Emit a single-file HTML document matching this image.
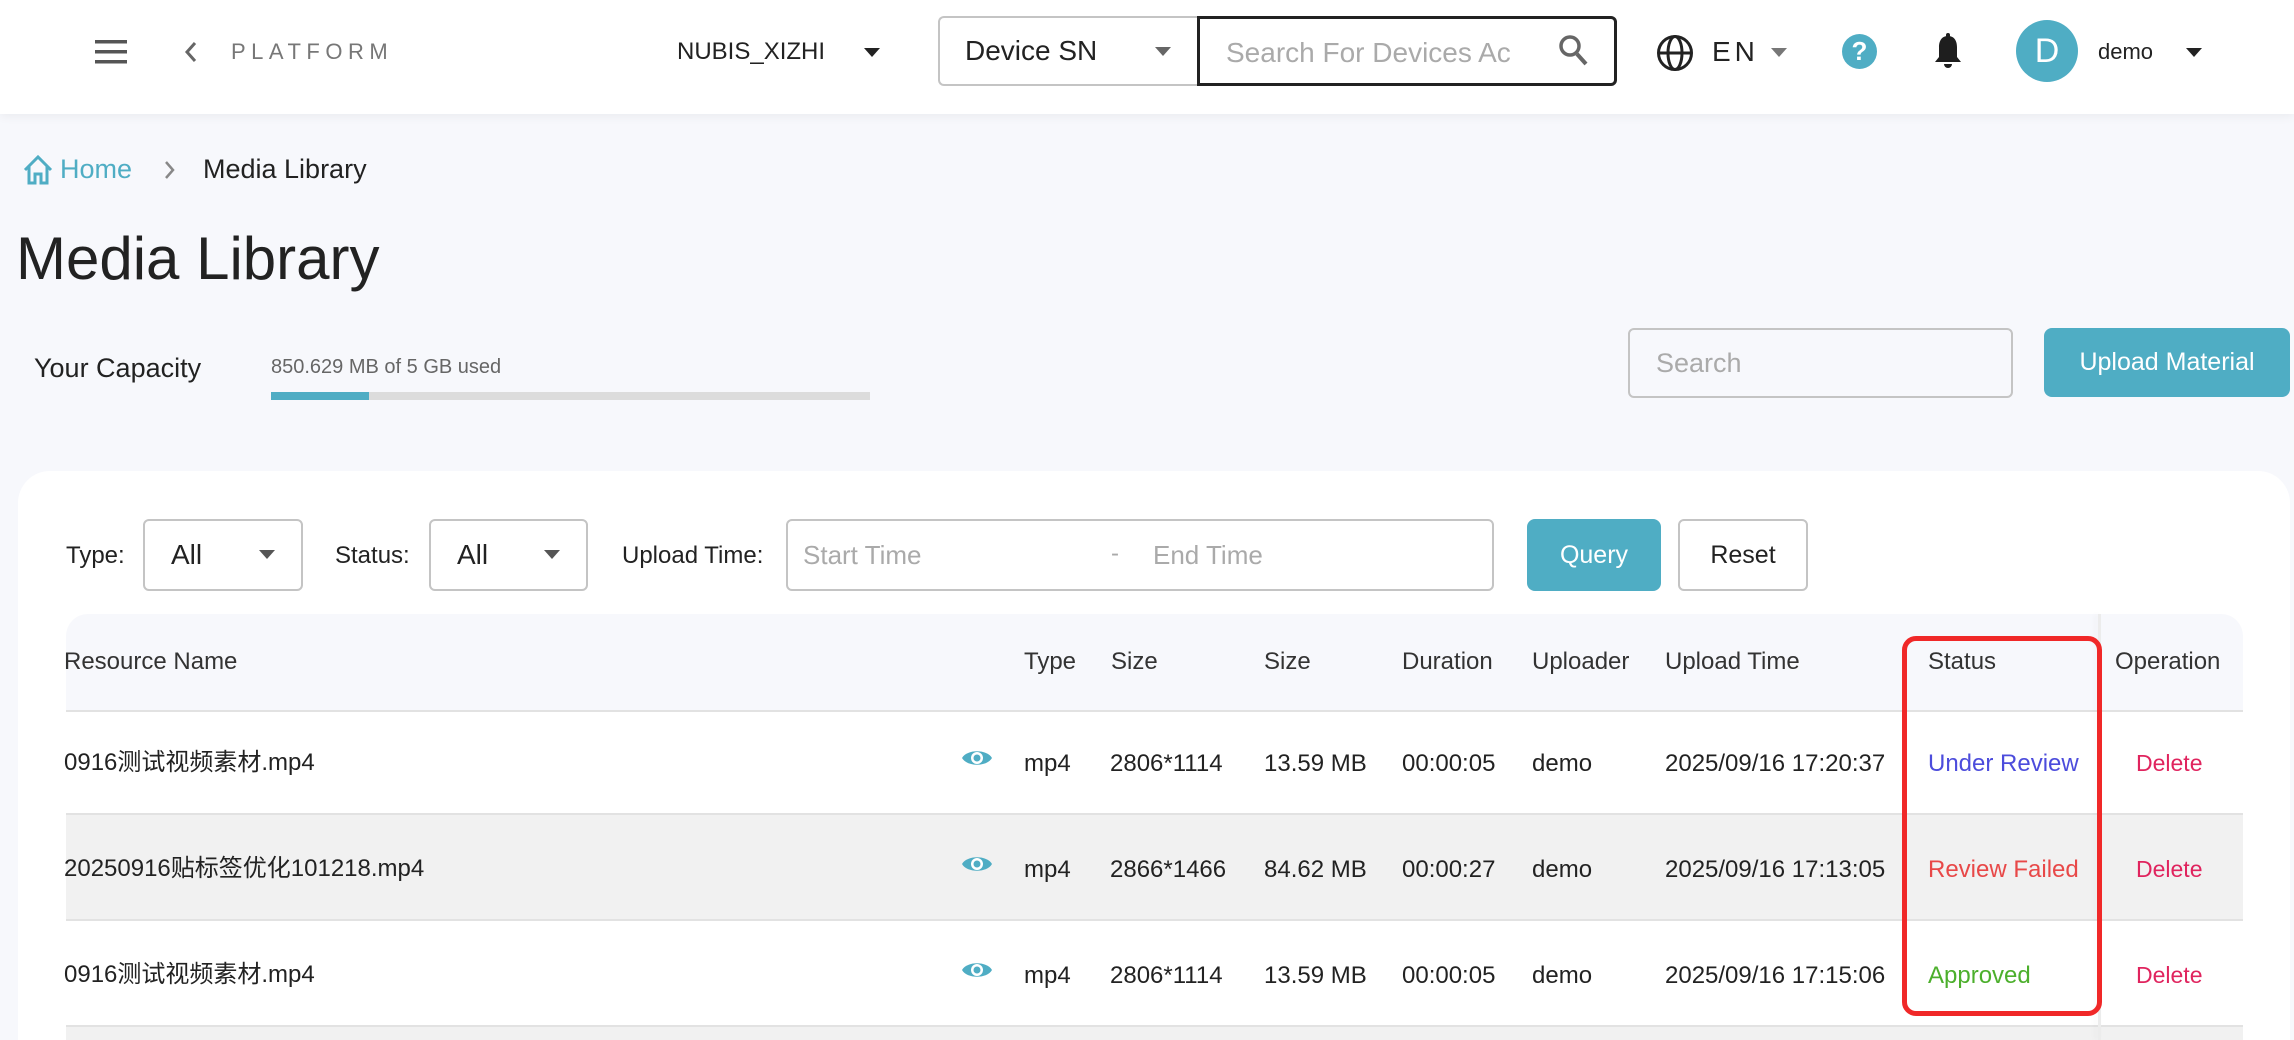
<!DOCTYPE html>
<html><head><meta charset="utf-8"><style>
*{box-sizing:border-box;margin:0;padding:0}
html{width:2294px;height:1040px;overflow:hidden}
body{width:2294px;height:1040px;overflow:hidden;background:#f7f8fc;font-family:"Liberation Sans","Noto Sans CJK SC",sans-serif;color:#222;position:relative}
.a{position:absolute;white-space:nowrap}
.hdr{position:absolute;left:0;top:0;width:2294px;height:114px;background:#fff;box-shadow:0 2px 10px rgba(0,0,0,.06)}
.caret{position:absolute;width:0;height:0;border-left:8px solid transparent;border-right:8px solid transparent;border-top:9px solid #222}
.box{position:absolute;border:2px solid #c4c4c4;border-radius:6px;background:#fff}
.th{position:absolute;top:648px;font-size:24px;color:#333;white-space:nowrap}
.td{position:absolute;font-size:24px;color:#222;white-space:nowrap}
</style></head><body>
<div class="hdr">
  <svg class="a" style="left:95px;top:40px" width="32" height="24" viewBox="0 0 32 24"><rect y="0" width="32" height="3.5" fill="#555"/><rect y="10" width="32" height="3.5" fill="#555"/><rect y="20" width="32" height="3.5" fill="#555"/></svg>
  <svg class="a" style="left:184px;top:41px" width="14" height="22" viewBox="0 0 14 22"><path d="M11 2 L3 11 L11 20" stroke="#666" stroke-width="3" fill="none"/></svg>
  <div class="a" style="left:231px;top:39px;font-size:22px;letter-spacing:5.5px;color:#777">PLATFORM</div>
  <div class="a" style="left:677px;top:38px;font-size:24px;color:#222">NUBIS_XIZHI</div>
  <div class="caret" style="left:864px;top:48px"></div>
  <div class="a" style="left:938px;top:16px;width:260px;height:70px;border:2px solid #c4c4c4;border-right:none;border-radius:6px 0 0 6px"></div>
  <div class="a" style="left:965px;top:35px;font-size:28px;color:#222">Device SN</div>
  <div class="caret" style="left:1155px;top:47px;border-top-color:#666"></div>
  <div class="a" style="left:1197px;top:16px;width:420px;height:70px;border:3px solid #222;border-radius:0 6px 6px 0"></div>
  <div class="a" style="left:1226px;top:37px;font-size:28px;color:#aaa">Search For Devices Ac</div>
  <svg class="a" style="left:1558px;top:34px" width="32" height="34" viewBox="0 0 32 34"><circle cx="12" cy="12" r="9" stroke="#666" stroke-width="3.5" fill="none"/><path d="M19 20 L28 30" stroke="#666" stroke-width="4"/></svg>
  <svg class="a" style="left:1656px;top:34px" width="38" height="38" viewBox="0 0 38 38"><circle cx="19" cy="19" r="16.5" stroke="#222" stroke-width="3" fill="none"/><ellipse cx="19" cy="19" rx="7" ry="16.5" stroke="#222" stroke-width="3" fill="none"/><path d="M2.5 19 H35.5" stroke="#222" stroke-width="3"/></svg>
  <div class="a" style="left:1712px;top:36px;font-size:28px;letter-spacing:4px;color:#222">EN</div>
  <div class="caret" style="left:1771px;top:48px;border-top-color:#777"></div>
  <div class="a" style="left:1842px;top:34px;width:35px;height:35px;border-radius:50%;background:#4fadc4;color:#fff;font-weight:bold;font-size:26px;text-align:center;line-height:35px">?</div>
  <svg class="a" style="left:1934px;top:33px" width="28" height="38" viewBox="0 0 28 38"><path d="M14 3 C7 3 5 9 5 14 V24 L1 29 H27 L23 24 V14 C23 9 21 3 14 3Z" fill="#1e1e1e"/><rect x="12" y="0" width="4" height="5" rx="2" fill="#1e1e1e"/><path d="M10 31 H18 A4 4 0 0 1 10 31Z" fill="#1e1e1e"/></svg>
  <div class="a" style="left:2016px;top:20px;width:62px;height:62px;border-radius:50%;background:#4fadc4;color:#fff;font-size:34px;text-align:center;line-height:62px">D</div>
  <div class="a" style="left:2098px;top:39px;font-size:22px;color:#222">demo</div>
  <div class="caret" style="left:2186px;top:48px"></div>
</div>

<svg class="a" style="left:22px;top:154px" width="32" height="32" viewBox="0 0 32 32"><path d="M3 16 L16 3 L29 16 M7 12 V29 H13 V20 H19 V29 H25 V12" stroke="#4fadc4" stroke-width="3" fill="none"/></svg>
<div class="a" style="left:60px;top:154px;font-size:27px;color:#4fadc4">Home</div>
<svg class="a" style="left:163px;top:159px" width="14" height="22" viewBox="0 0 14 22"><path d="M3 3 L10 11 L3 19" stroke="#888" stroke-width="2.5" fill="none"/></svg>
<div class="a" style="left:203px;top:154px;font-size:27px;color:#222">Media Library</div>
<div class="a" style="left:16px;top:224px;font-size:60px;color:#222">Media Library</div>

<div class="a" style="left:34px;top:353px;font-size:27px;color:#222">Your Capacity</div>
<div class="a" style="left:271px;top:356px;font-size:20px;color:#666">850.629 MB of 5 GB used</div>
<div class="a" style="left:271px;top:392px;width:599px;height:8px;background:#dcdcdc"></div>
<div class="a" style="left:271px;top:392px;width:98px;height:8px;background:#4fadc4"></div>

<div class="a" style="left:1628px;top:328px;width:385px;height:70px;border:2px solid #c4c4c4;border-radius:6px;background:#f7f8fc"></div>
<div class="a" style="left:1656px;top:348px;font-size:27px;color:#aaa">Search</div>
<div class="a" style="left:2044px;top:328px;width:246px;height:69px;border-radius:8px;background:#4fadc4;color:#fff;font-size:25px;text-align:center;line-height:69px">Upload Material</div>

<div class="a" style="left:18px;top:471px;width:2272px;height:569px;background:#fff;border-radius:32px 32px 0 0"></div>

<div class="a" style="left:66px;top:542px;font-size:24px">Type:</div>
<div class="box" style="left:143px;top:519px;width:160px;height:72px"></div>
<div class="a" style="left:171px;top:539px;font-size:28px">All</div>
<div class="caret" style="left:259px;top:550px;border-top-color:#555"></div>
<div class="a" style="left:335px;top:542px;font-size:24px">Status:</div>
<div class="box" style="left:429px;top:519px;width:159px;height:72px"></div>
<div class="a" style="left:457px;top:539px;font-size:28px">All</div>
<div class="caret" style="left:544px;top:550px;border-top-color:#555"></div>
<div class="a" style="left:622px;top:542px;font-size:24px">Upload Time:</div>
<div class="box" style="left:786px;top:519px;width:708px;height:72px"></div>
<div class="a" style="left:803px;top:540px;font-size:26px;color:#aaa">Start Time</div>
<div class="a" style="left:1111px;top:540px;font-size:24px;color:#aaa">-</div>
<div class="a" style="left:1153px;top:540px;font-size:26px;color:#aaa">End Time</div>
<div class="a" style="left:1527px;top:519px;width:134px;height:72px;border-radius:8px;background:#4fadc4;color:#fff;font-size:25px;text-align:center;line-height:72px">Query</div>
<div class="box" style="left:1678px;top:519px;width:130px;height:72px;font-size:25px;text-align:center;line-height:68px">Reset</div>

<div class="a" style="left:66px;top:614px;width:2177px;height:98px;background:#f7f8fc;border-radius:22px 22px 0 0;border-bottom:2px solid #e2e2e2"></div>
<div class="a" style="left:66px;top:815px;width:2177px;height:106px;background:#f1f1f1"></div>
<div class="a" style="left:66px;top:813px;width:2177px;height:2px;background:#e2e2e2"></div>
<div class="a" style="left:66px;top:919px;width:2177px;height:2px;background:#e2e2e2"></div>
<div class="a" style="left:66px;top:1025px;width:2177px;height:2px;background:#e2e2e2"></div>
<div class="a" style="left:66px;top:1027px;width:2177px;height:13px;background:#f1f1f1"></div>
<div class="a" style="left:2098px;top:614px;width:3px;height:426px;background:#ececec;box-shadow:-3px 0 6px rgba(0,0,0,.04)"></div>

<div class="th" style="left:64px">Resource Name</div>
<div class="th" style="left:1024px">Type</div>
<div class="th" style="left:1111px">Size</div>
<div class="th" style="left:1264px">Size</div>
<div class="th" style="left:1402px">Duration</div>
<div class="th" style="left:1532px">Uploader</div>
<div class="th" style="left:1665px">Upload Time</div>
<div class="th" style="left:1928px">Status</div>
<div class="th" style="left:2115px">Operation</div>

<div class="td" style="left:64px;top:742px">0916测试视频素材.mp4</div>
<div class="td" style="left:64px;top:848px">20250916贴标签优化101218.mp4</div>
<div class="td" style="left:64px;top:954px">0916测试视频素材.mp4</div>

<svg class="a" style="left:961px;top:747px" width="32" height="22" viewBox="0 0 32 22"><path d="M1 11 C6 2 26 2 31 11 C26 20 6 20 1 11Z" fill="#4fadc4"/><circle cx="16" cy="11" r="6" fill="#fff"/><circle cx="16" cy="11" r="3.5" fill="#4fadc4"/></svg>
<svg class="a" style="left:961px;top:853px" width="32" height="22" viewBox="0 0 32 22"><path d="M1 11 C6 2 26 2 31 11 C26 20 6 20 1 11Z" fill="#4fadc4"/><circle cx="16" cy="11" r="6" fill="#fff"/><circle cx="16" cy="11" r="3.5" fill="#4fadc4"/></svg>
<svg class="a" style="left:961px;top:959px" width="32" height="22" viewBox="0 0 32 22"><path d="M1 11 C6 2 26 2 31 11 C26 20 6 20 1 11Z" fill="#4fadc4"/><circle cx="16" cy="11" r="6" fill="#fff"/><circle cx="16" cy="11" r="3.5" fill="#4fadc4"/></svg>

<div class="td" style="left:1024px;top:750px">mp4</div>
<div class="td" style="left:1110px;top:750px">2806*1114</div>
<div class="td" style="left:1264px;top:750px">13.59 MB</div>
<div class="td" style="left:1402px;top:750px">00:00:05</div>
<div class="td" style="left:1532px;top:750px">demo</div>
<div class="td" style="left:1665px;top:750px">2025/09/16 17:20:37</div>
<div class="td" style="left:1928px;top:750px;color:#4c4cdc">Under Review</div>
<div class="td" style="left:2136px;top:750px;color:#e0245e;font-size:23px">Delete</div>

<div class="td" style="left:1024px;top:856px">mp4</div>
<div class="td" style="left:1110px;top:856px">2866*1466</div>
<div class="td" style="left:1264px;top:856px">84.62 MB</div>
<div class="td" style="left:1402px;top:856px">00:00:27</div>
<div class="td" style="left:1532px;top:856px">demo</div>
<div class="td" style="left:1665px;top:856px">2025/09/16 17:13:05</div>
<div class="td" style="left:1928px;top:856px;color:#e84848">Review Failed</div>
<div class="td" style="left:2136px;top:856px;color:#e0245e;font-size:23px">Delete</div>

<div class="td" style="left:1024px;top:962px">mp4</div>
<div class="td" style="left:1110px;top:962px">2806*1114</div>
<div class="td" style="left:1264px;top:962px">13.59 MB</div>
<div class="td" style="left:1402px;top:962px">00:00:05</div>
<div class="td" style="left:1532px;top:962px">demo</div>
<div class="td" style="left:1665px;top:962px">2025/09/16 17:15:06</div>
<div class="td" style="left:1928px;top:962px;color:#4caf2c">Approved</div>
<div class="td" style="left:2136px;top:962px;color:#e0245e;font-size:23px">Delete</div>

<div class="a" style="left:1902px;top:636px;width:200px;height:380px;border:5px solid #f02828;border-radius:14px"></div>
</body></html>
